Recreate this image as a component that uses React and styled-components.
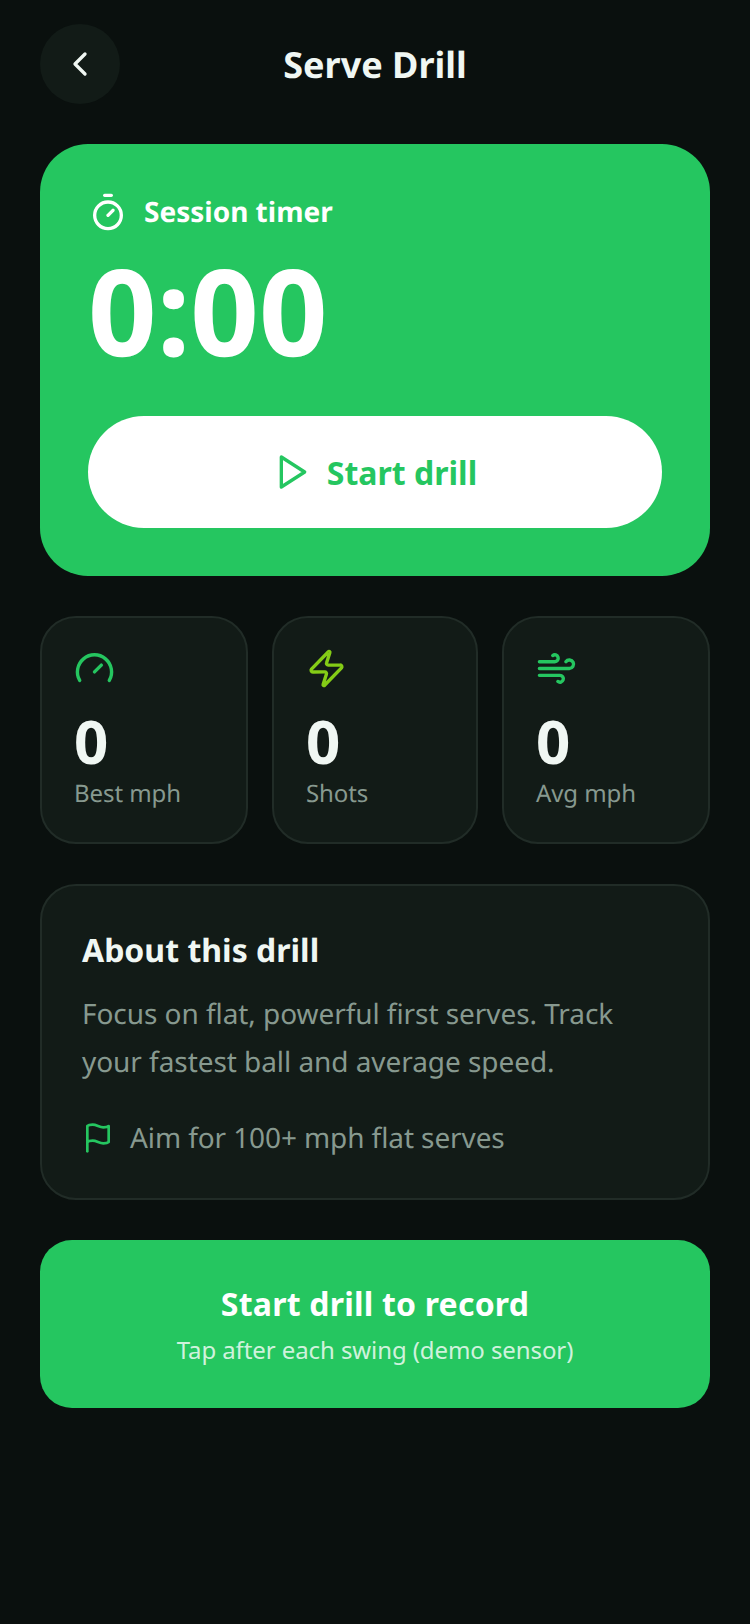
import { createGlobalStyle } from "styled-components";
import styled from "styled-components";
import { ChevronLeft, Timer, Gauge, Zap, Wind } from "lucide-react";
import { FiPlay, FiFlag } from "react-icons/fi";

const GlobalStyle = createGlobalStyle`
  * { box-sizing: border-box; }
  html, body { margin: 0; background: #0a100e; }
  body {
    font-family: "Noto Sans", sans-serif;
    text-rendering: geometricPrecision;
  }
`;

const Page = styled.div`
  width: 750px;
  min-height: 1624px;
  background: #0a100e;
  padding: 24px 40px 0;
  display: flex;
  flex-direction: column;
  gap: 40px;
`;

const Header = styled.div`
  display: flex;
  align-items: center;
  justify-content: space-between;
`;

const BackButton = styled.button`
  width: 80px;
  height: 80px;
  border: none;
  border-radius: 50%;
  background: #121b17;
  color: #f0f7f3;
  display: flex;
  align-items: center;
  justify-content: center;
  padding: 0;
`;

const Title = styled.h1`
  margin: 2px 0 0;
  font-size: 36px;
  line-height: 48px;
  font-weight: 700;
  color: #f0f7f3;
`;

const Spacer = styled.div`
  width: 80px;
`;

const Hero = styled.section`
  background: #25c660;
  border-radius: 48px;
  padding: 48px;
  display: flex;
  flex-direction: column;
`;

const HeroLabel = styled.div`
  display: flex;
  align-items: center;
  gap: 16px;
  color: #fff;
  font-size: 28px;
  line-height: 36px;
  font-weight: 700;
`;

const TimerText = styled.div`
  margin-top: 19px;
  color: #fff;
  font-size: 120px;
  line-height: 120px;
  font-weight: 700;
`;

const StartButton = styled.button`
  margin-top: 45px;
  height: 112px;
  border: none;
  border-radius: 56px;
  background: #fff;
  color: #25c660;
  font-family: inherit;
  font-size: 32px;
  font-weight: 700;
  display: flex;
  align-items: center;
  justify-content: center;
  gap: 14px;
`;

const Stats = styled.div`
  display: grid;
  grid-template-columns: 1fr 206px 1fr;
  gap: 24px;
`;

const StatCard = styled.div`
  height: 228px;
  background: #121b17;
  border: 2px solid #212c27;
  border-radius: 36px;
  padding: 30px 32px;
  display: flex;
  flex-direction: column;
`;

const StatValue = styled.div`
  margin-top: 16px;
  color: #f0f7f3;
  font-size: 60px;
  line-height: 73px;
  font-weight: 700;
`;

const StatLabel = styled.div`
  color: #87998f;
  font-size: 24px;
  line-height: 32px;
  letter-spacing: -0.08px;
`;

const About = styled.section`
  background: #121b17;
  border: 2px solid #212c27;
  border-radius: 36px;
  padding: 43px 40px 38px;
`;

const AboutTitle = styled.h2`
  margin: 0;
  color: #f0f7f3;
  font-size: 32px;
  line-height: 44px;
  font-weight: 700;
`;

const AboutText = styled.p`
  margin: 17px 0 0;
  color: #87998f;
  font-size: 28px;
  line-height: 48px;
  letter-spacing: -0.06px;
`;

const Tip = styled.div`
  margin-top: 30px;
  display: flex;
  align-items: center;
  gap: 16px;
  color: #87998f;
  font-size: 28px;
  line-height: 44px;
  letter-spacing: -0.1px;
`;

const RecordButton = styled.button`
  height: 168px;
  border: none;
  border-radius: 32px;
  background: #25c660;
  font-family: inherit;
  display: flex;
  flex-direction: column;
  align-items: center;
  justify-content: center;
  gap: 8px;
`;

const RecordTitle = styled.span`
  color: #fff;
  font-size: 32px;
  line-height: 44px;
  font-weight: 700;
  letter-spacing: 0.2px;
`;

const RecordHint = styled.span`
  color: rgba(255, 255, 255, 0.8);
  font-size: 24px;
  line-height: 32px;
  letter-spacing: -0.09px;
`;

const stats = [
  { icon: <Gauge size={41} color="#25c660" strokeWidth={2} />, value: "0", label: "Best mph" },
  { icon: <Zap size={41} color="#84cc16" strokeWidth={2} />, value: "0", label: "Shots" },
  { icon: <Wind size={41} color="#25c660" strokeWidth={2} />, value: "0", label: "Avg mph" },
];

const App = () => {
  return (
    <Page>
      <GlobalStyle />
      <Header>
        <BackButton aria-label="Back">
          <ChevronLeft size={40} strokeWidth={2} />
        </BackButton>
        <Title>Serve Drill</Title>
        <Spacer />
      </Header>

      <Hero>
        <HeroLabel>
          <Timer size={40} strokeWidth={2} />
          Session timer
        </HeroLabel>
        <TimerText>0:00</TimerText>
        <StartButton>
          <FiPlay size={40} />
          Start drill
        </StartButton>
      </Hero>

      <Stats>
        {stats.map((s) => (
          <StatCard key={s.label}>
            {s.icon}
            <StatValue>{s.value}</StatValue>
            <StatLabel>{s.label}</StatLabel>
          </StatCard>
        ))}
      </Stats>

      <About>
        <AboutTitle>About this drill</AboutTitle>
        <AboutText>
          Focus on flat, powerful first serves. Track your fastest ball and average speed.
        </AboutText>
        <Tip>
          <FiFlag size={32} color="#25c660" />
          Aim for 100+ mph flat serves
        </Tip>
      </About>

      <RecordButton>
        <RecordTitle>Start drill to record</RecordTitle>
        <RecordHint>Tap after each swing (demo sensor)</RecordHint>
      </RecordButton>
    </Page>
  );
};

export default App;
